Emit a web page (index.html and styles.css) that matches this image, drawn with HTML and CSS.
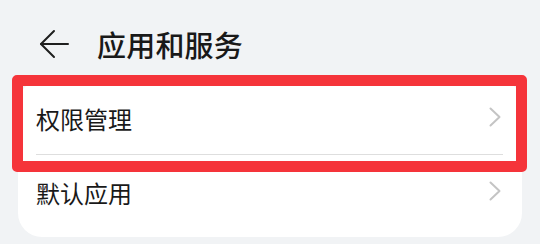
FILE: index.html
```html
<!DOCTYPE html>
<html lang="zh">
<head>
<meta charset="utf-8">
<link rel="stylesheet" href="styles.css">
</head>
<body>
<div class="page">
  <header class="header">
    <svg class="back" width="30" height="30" viewBox="0 0 30 30" fill="none" stroke="#1f1f1f" stroke-width="2" stroke-linecap="round" stroke-linejoin="round">
      <path d="M2 15H29"/>
      <path d="M15 2L2 15L15 28"/>
    </svg>
    <h1 class="title">应用和服务</h1>
  </header>
  <div class="card">
    <div class="row">
      <span class="label">权限管理</span>
      <svg class="chev" width="12" height="20" viewBox="0 0 12 20" fill="none" stroke="#c4c4c4" stroke-width="2" stroke-linecap="round" stroke-linejoin="round"><path d="M1.5 1.5L10.5 10L1.5 18.5"/></svg>
    </div>
    <div class="divider"></div>
    <div class="row row2">
      <span class="label">默认应用</span>
      <svg class="chev" width="12" height="20" viewBox="0 0 12 20" fill="none" stroke="#c4c4c4" stroke-width="2" stroke-linecap="round" stroke-linejoin="round"><path d="M1.5 1.5L10.5 10L1.5 18.5"/></svg>
    </div>
    <div class="highlight"></div>
  </div>
</div>
</body>
</html>
```
FILE: styles.css
```css
html, body {
  margin: 0;
  padding: 0;
  background: #f1f3f5;
}
.page {
  width: 540px;
  height: 244px;
  font-family: "Noto Sans CJK SC", "Noto Sans", sans-serif;
  color: #191919;
}
.header {
  display: flex;
  align-items: center;
  height: 72px;
  padding-top: 8px;
  padding-left: 39px;
  box-sizing: content-box;
}
.back {
  display: block;
  flex: none;
}
.title {
  margin: 0 0 0 28px;
  font-size: 29px;
  font-weight: 500;
  line-height: 1;
  letter-spacing: 0.2px;
}
.card {
  position: relative;
  margin: 0 18px;
  background: #ffffff;
  border-radius: 24px;
  padding-bottom: 10px;
}
.row {
  display: flex;
  align-items: center;
  justify-content: space-between;
  height: 74px;
  padding: 0 21px 0 18px;
}
.row2 {
  height: 72px;
}
.label {
  font-size: 24px;
  line-height: 1;
  padding-top: 4px;
}
.chev {
  display: block;
}
.divider {
  height: 1px;
  background: #dedede;
  margin: 0 19px 0 18px;
}
.highlight {
  position: absolute;
  left: -6px;
  top: -5px;
  width: 515px;
  height: 97px;
  box-sizing: border-box;
  border: 11px solid #f5343a;
  border-radius: 5px;
}
```
